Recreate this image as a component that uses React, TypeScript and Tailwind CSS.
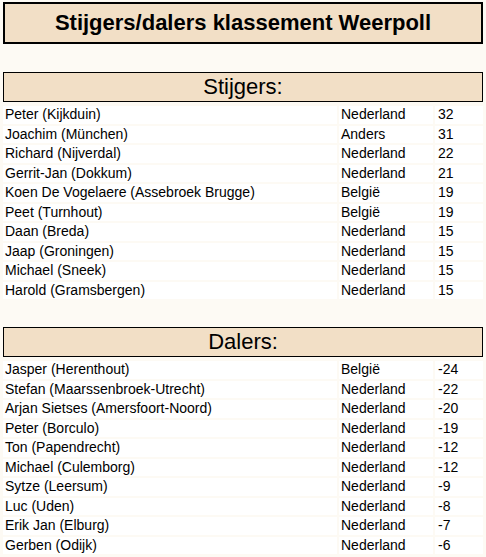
const stijgers = [
  ["Peter (Kijkduin)", "Nederland", "32"],
  ["Joachim (München)", "Anders", "31"],
  ["Richard (Nijverdal)", "Nederland", "22"],
  ["Gerrit-Jan (Dokkum)", "Nederland", "21"],
  ["Koen De Vogelaere (Assebroek Brugge)", "België", "19"],
  ["Peet (Turnhout)", "België", "19"],
  ["Daan (Breda)", "Nederland", "15"],
  ["Jaap (Groningen)", "Nederland", "15"],
  ["Michael (Sneek)", "Nederland", "15"],
  ["Harold (Gramsbergen)", "Nederland", "15"],
];

const dalers = [
  ["Jasper (Herenthout)", "België", "-24"],
  ["Stefan (Maarssenbroek-Utrecht)", "Nederland", "-22"],
  ["Arjan Sietses (Amersfoort-Noord)", "Nederland", "-20"],
  ["Peter (Borculo)", "Nederland", "-19"],
  ["Ton (Papendrecht)", "Nederland", "-12"],
  ["Michael (Culemborg)", "Nederland", "-12"],
  ["Sytze (Leersum)", "Nederland", "-9"],
  ["Luc (Uden)", "Nederland", "-8"],
  ["Erik Jan (Elburg)", "Nederland", "-7"],
  ["Gerben (Odijk)", "Nederland", "-6"],
];

function Section({ title, rows }: { title: string; rows: string[][] }) {
  return (
    <div>
      <div className="h-[30px] border border-black bg-[#f2dfc6] text-center text-[22px] leading-[28px]">
        {title}
      </div>
      <div className="mt-[4px] grid grid-cols-[334px_94px_48px] gap-[2px] text-[14px] leading-[17.5px]">
        {rows.map((r, i) => (
          <div key={i} className="contents">
            <div className="h-[17.5px] bg-white pl-[2px]">{r[0]}</div>
            <div className="h-[17.5px] bg-white pl-[2px]">{r[1]}</div>
            <div className="h-[17.5px] bg-white pl-[3px]">{r[2]}</div>
          </div>
        ))}
      </div>
    </div>
  );
}

export default function App() {
  return (
    <div className="min-h-[557px] bg-[#fdfaf4] px-[3px] pt-[2px] text-black [font-family:'Liberation_Sans',Arial,sans-serif]">
      <div className="h-[42px] border-2 border-black bg-[#f2dfc6] text-center text-[22px] font-bold leading-[38px]">
        Stijgers/dalers klassement Weerpoll
      </div>
      <div className="mt-[28px]">
        <Section title="Stijgers:" rows={stijgers} />
      </div>
      <div className="mt-[28px]">
        <Section title="Dalers:" rows={dalers} />
      </div>
    </div>
  );
}
